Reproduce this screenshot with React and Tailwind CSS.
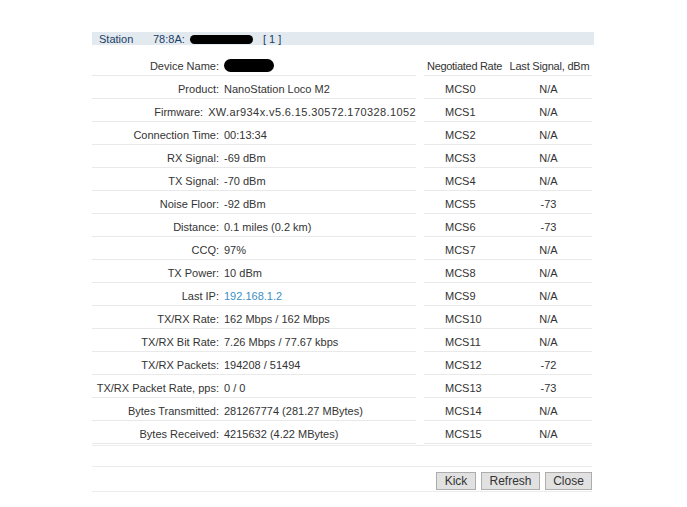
import React from "react";

const left = [
  ["Device Name:", null],
  ["Product:", "NanoStation Loco M2"],
  ["Firmware:", "XW.ar934x.v5.6.15.30572.170328.1052"],
  ["Connection Time:", "00:13:34"],
  ["RX Signal:", "-69 dBm"],
  ["TX Signal:", "-70 dBm"],
  ["Noise Floor:", "-92 dBm"],
  ["Distance:", "0.1 miles (0.2 km)"],
  ["CCQ:", "97%"],
  ["TX Power:", "10 dBm"],
  ["Last IP:", "192.168.1.2"],
  ["TX/RX Rate:", "162 Mbps / 162 Mbps"],
  ["TX/RX Bit Rate:", "7.26 Mbps / 77.67 kbps"],
  ["TX/RX Packets:", "194208 / 51494"],
  ["TX/RX Packet Rate, pps:", "0 / 0"],
  ["Bytes Transmitted:", "281267774 (281.27 MBytes)"],
  ["Bytes Received:", "4215632 (4.22 MBytes)"],
];

const sig = ["N/A", "N/A", "N/A", "N/A", "N/A", "-73", "-73", "N/A", "N/A", "N/A", "N/A", "N/A", "-72", "-73", "N/A", "N/A"];

export default function App() {
  return (
    <div
      className="w-[687px] h-[507px] bg-white text-[11px] text-[#333] leading-none"
      style={{ fontFamily: '"Liberation Sans", Arial, sans-serif' }}
    >
      <div className="pt-[32px] pl-[92px] w-[594px]">
        <div className="h-[13px] bg-[#e3eaef] flex items-center text-[#1b3d66] pt-[1px]">
          <span className="ml-[7px] w-[54px]">Station</span>
          <span className="w-[37px] whitespace-nowrap">78:8A:</span>
          <span className="inline-block w-[63px] h-[9px] bg-black rounded-full"></span>
          <span className="ml-[10px] whitespace-pre">[ 1 ]</span>
        </div>
        <div className="mt-[8px] flex flex-col">
          {left.map(([label, val], i) => (
            <div key={i} className="flex gap-[8px]">
              <div className="w-[324px] h-[23px] border-b border-[#e9e9e9] flex items-center pt-[5px]">
                <div className="w-[127px] text-right whitespace-nowrap">{label}</div>
                <div className="pl-[5px] flex items-center whitespace-nowrap">
                  {val === null ? (
                    <span className="inline-block w-[50px] h-[13px] bg-black rounded-full -mt-[2px]"></span>
                  ) : label === "Last IP:" ? (
                    <span className="text-[#3d8fc3]">{val}</span>
                  ) : label === "Firmware:" ? (
                    <span className="tracking-[0.4px]">{val}</span>
                  ) : (
                    val
                  )}
                </div>
              </div>
              <div className="w-[168px] h-[23px] border-b border-[#e9e9e9] flex items-center pt-[5px]">
                {i === 0 ? (
                  <>
                    <div className="w-[83px] pl-[3px] whitespace-nowrap tracking-[-0.3px]">Negotiated Rate</div>
                    <div className="w-[85px] text-center whitespace-nowrap tracking-[-0.2px]">Last Signal, dBm</div>
                  </>
                ) : (
                  <>
                    <div className="w-[81px] pl-[21px]">MCS{i - 1}</div>
                    <div className="w-[87px] text-center">{sig[i - 1]}</div>
                  </>
                )}
              </div>
            </div>
          ))}
        </div>
        <div className="mt-[1px] h-[22px] border-t border-b border-[#ececec] w-[500px]"></div>
        <div className="w-[500px] h-[25px] border-b border-[#ececec] flex justify-end items-start pt-[5px] gap-[5px]">
          <button className="w-[40px] h-[18px] bg-[#e1e1e1] border border-[#adadad] text-[#333] text-[12px] leading-none">Kick</button>
          <button className="w-[59px] h-[18px] bg-[#e1e1e1] border border-[#adadad] text-[#333] text-[12px] leading-none">Refresh</button>
          <button className="w-[47px] h-[18px] bg-[#e1e1e1] border border-[#adadad] text-[#333] text-[12px] leading-none">Close</button>
        </div>
      </div>
    </div>
  );
}
